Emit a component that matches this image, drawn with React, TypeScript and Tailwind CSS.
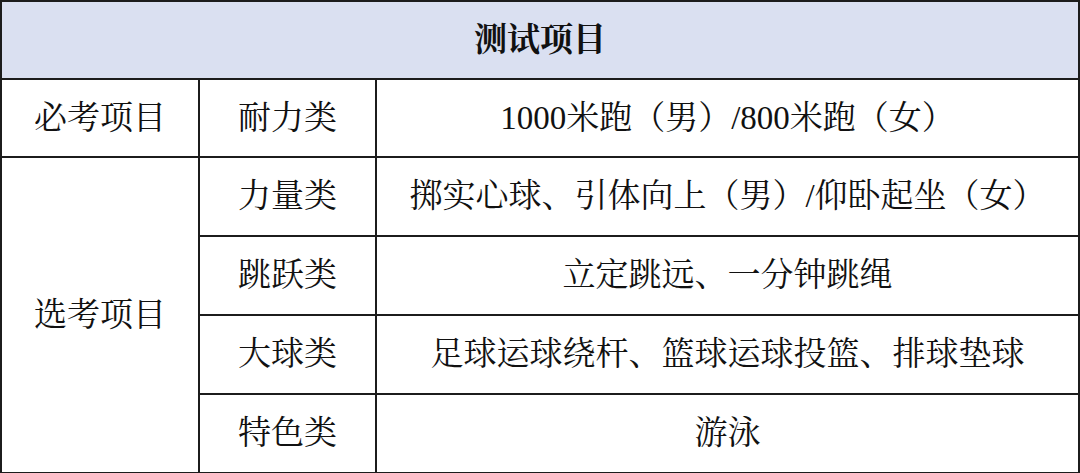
const font = "font-['Liberation_Serif','Noto_Serif_CJK_SC','Noto_Sans_CJK_SC',serif]";

const rows = [
  { type: '力量类', items: '掷实心球、引体向上（男）/仰卧起坐（女）' },
  { type: '跳跃类', items: '立定跳远、一分钟跳绳' },
  { type: '大球类', items: '足球运球绕杆、篮球运球投篮、排球垫球' },
  { type: '特色类', items: '游泳' },
];

const cell = 'border-2 border-[#1c1c1c] text-center align-middle';

export default function App() {
  return (
    <div className={`w-[1080px] h-[473px] bg-white text-[#111] ${font}`}>
      <table className="w-full h-full border-collapse table-fixed text-[33px] leading-none">
        <colgroup>
          <col className="w-[198px]" />
          <col className="w-[177px]" />
          <col />
        </colgroup>
        <tbody>
          <tr className="h-[78px]">
            <td colSpan={3} className={`${cell} bg-[#dae0f1] font-bold`}>
              测试项目
            </td>
          </tr>
          <tr className="h-[78px]">
            <td className={cell}>必考项目</td>
            <td className={cell}>耐力类</td>
            <td className={cell}>1000米跑（男）/800米跑（女）</td>
          </tr>
          {rows.map((r, i) => (
            <tr key={r.type} className="h-[79px]">
              {i === 0 && (
                <td rowSpan={4} className={cell}>
                  选考项目
                </td>
              )}
              <td className={cell}>{r.type}</td>
              <td className={cell}>{r.items}</td>
            </tr>
          ))}
        </tbody>
      </table>
    </div>
  );
}
